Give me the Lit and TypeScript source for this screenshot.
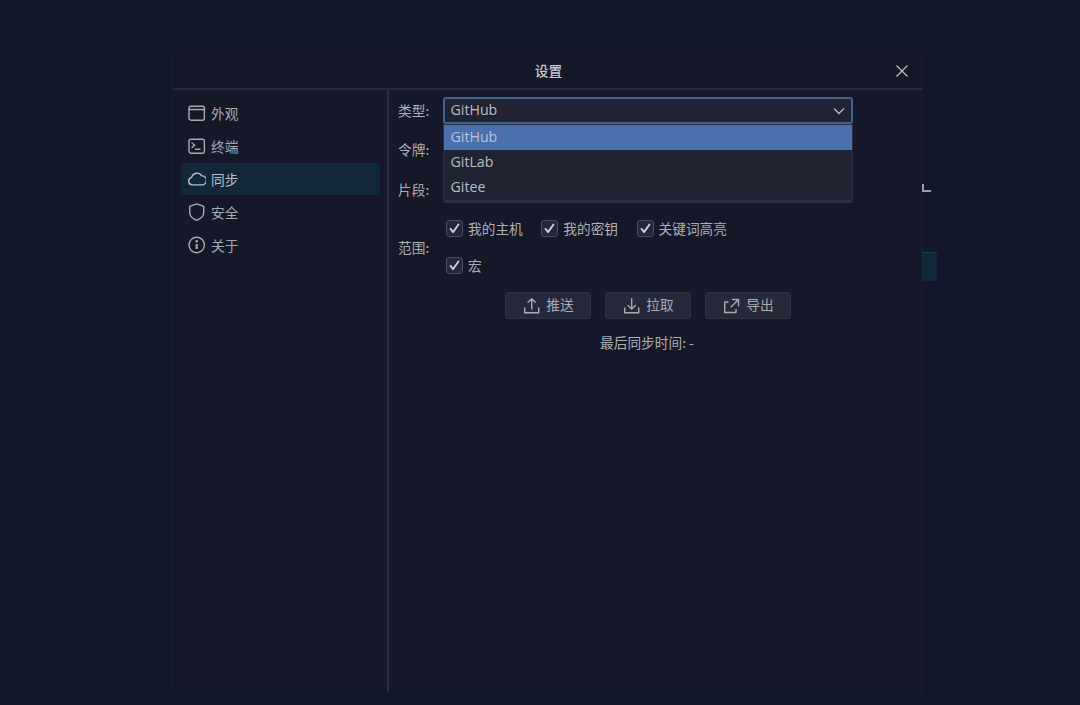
import { LitElement, html, css, svg } from "lit";
import { customElement } from "lit/decorators.js";

const ico = (body: unknown, size = 18) => html`<svg class="ico" width=${size} height=${size} viewBox="0 0 18 18" fill="none" stroke="currentColor" stroke-width="1.400" stroke-linecap="round" stroke-linejoin="round">${body}</svg>`;

const NAV = [
  { t: "外观", i: svg`<rect x="1" y="2.200" width="15.400" height="14" rx="2"/><path d="M1 5.500h15.400"/>` },
  { t: "终端", i: svg`<rect x="1" y="2.200" width="15.400" height="14" rx="2"/><path d="M4 6l2.800 2.200L4 10.400M7.500 12.200h4.500"/>` },
  { t: "同步", i: svg`<path d="M4.300 15.500a3.800 3.800 0 0 1-.6-7.500A5.400 5.400 0 0 1 13.700 6.500a4.500 4.500 0 0 1 .3 9z" transform="translate(0 -.6)"/>`, active: true },
  { t: "安全", i: svg`<path d="M8.700.800l7 2.500v6c0 3.600-2.800 6.500-7 8.100-4.200-1.600-7-4.500-7-8.100v-6z"/>` },
  { t: "关于", i: svg`<circle cx="8.700" cy="9" r="7.700"/><path d="M8.700 8v5" stroke-width="2.200" stroke-linecap="butt"/><circle cx="8.700" cy="5.300" r="1.300" fill="currentColor" stroke="none"/>` },
];

@customElement("app-root")
export class AppRoot extends LitElement {
  static styles = css`
    :host { display: block; width: 1080px; height: 705px; background: #12172a; font-family: "Noto Sans CJK SC", "Noto Sans", sans-serif; color: #b4b6bc; font-size: 13.700px; overflow: hidden; }
    .page { display: flex; justify-content: flex-start; padding: 53px 0 0 173px; height: 652px; box-sizing: border-box; }
    .dialog { position: relative; width: 749px; height: 639px; box-sizing: border-box; background: #141829; box-shadow: 0 0 0 1px #1a1d2d; display: flex; flex-direction: column; }
    .head { height: 37px; box-sizing: border-box; flex: none; display: flex; align-items: center; justify-content: center; border-bottom: 2px solid #262a3c; color: #c8c9ce; font-weight: 500; position: relative; padding: 0 0 1px 2px; }
    .close { position: absolute; right: 13px; top: 11px; color: #c4c6cc; display: block; }
    .body { flex: 1; display: flex; min-height: 0; }
    .side { width: 216px; flex: none; border-right: 2px solid #2b2e41; box-sizing: border-box; padding: 7px 7px 0 8px; display: flex; flex-direction: column; gap: 1px; }
    .nav { height: 32px; display: flex; align-items: center; gap: 5px; padding-left: 7px; border-radius: 3px; color: #a8aab1; }
    .nav.active { background: #112838; color: #b7c0c8; }
    .ico { flex: none; display: block; }
    .main { flex: 1; padding: 7px 0 0 9px; position: relative; }
    .row { display: flex; align-items: center; }
    .label { width: 45px; flex: none; color: #adafb6; padding-bottom: 1px; box-sizing: border-box; }
    .select { width: 410px; height: 27px; box-sizing: border-box; border: 2px solid #3c6491; border-radius: 3px; background: #202332; display: flex; align-items: center; justify-content: space-between; padding: 0 5px 2px 5.500px; font-size: 14.200px; font-family: "Open Sans", "Noto Sans", sans-serif; color: #bcbec3; }
    .chev { color: #b9bbc1; margin-top: 2px; }
    .r2 { height: 40px; margin-top: 5px; }
    .r3 { height: 40px; }
    .menu { position: absolute; left: 54px; top: 34px; width: 410px; height: 79px; box-sizing: border-box; background: #202332; border: 1px solid #2e3142; border-bottom-width: 3px; border-radius: 0 0 3px 3px; font-size: 14.200px; font-family: "Open Sans", "Noto Sans", sans-serif; color: #b9bbc0; }
    .opt { height: 25px; padding: 0 0 2px 6.500px; box-sizing: border-box; display: flex; align-items: center; }
    .opt.sel { background: #4b70ae; color: #b9c3d6; }
    .scope { height: 76px; }
    .checks { display: flex; flex-direction: column; gap: 13px; padding-left: 3px; }
    .line { display: flex; gap: 18.500px; }
    .check { display: flex; align-items: center; gap: 5px; height: 24px; color: #adafb6; }
    .check-text { padding-bottom: 1px; }
    .box { width: 17px; height: 17px; box-sizing: border-box; background: #252838; border: 1.500px solid #4a4d60; border-radius: 3px; display: flex; align-items: center; justify-content: center; color: #d0d2d6; margin-bottom: 1px; }
    .actions { display: flex; gap: 14px; justify-content: flex-start; padding-left: 107px; margin-top: 7px; }
    .btn { width: 86px; height: 27px; box-sizing: border-box; background: #262939; border: 1px solid #2f3244; border-radius: 3px; display: flex; align-items: center; justify-content: center; gap: 6px; color: #a9abb2; }
    .btn-text { padding-bottom: 3px; }
    .last { margin-top: 13px; padding-left: 202px; color: #adafb6; height: 20px; line-height: 20px; }
    .peek-l { position: absolute; left: 749px; top: 131px; width: 9px; height: 8px; box-sizing: border-box; border-left: 2px solid #9a9ca2; border-bottom: 2px solid #9a9ca2; }
    .peek-t { position: absolute; left: 749px; top: 199px; width: 15px; height: 29px; background: #112838; border-top: 1px solid #1d3e55; border-radius: 0 3px 3px 0; box-sizing: border-box; }
  `;

  private check(t: string) {
    return html`<div class="check"><span class="box">${ico(svg`<path d="M3.500 9.500l3.500 4.500L14.500 3.500" stroke-width="2.500"/>`, 13)}</span><span class="check-text">${t}</span></div>`;
  }

  render() {
    return html`<div class="page"><div class="dialog">
      <div class="peek-l"></div><div class="peek-t"></div>
      <div class="head">设置
        <svg class="close" width="14" height="14" viewBox="0 0 14 14" fill="none" stroke="currentColor" stroke-width="1.100"><path d="M1.500 1.500l11 11M12.500 1.500l-11 11"/></svg>
      </div>
      <div class="body">
        <div class="side">
          ${NAV.map((n) => html`<div class="nav ${n.active ? "active" : ""}">${ico(n.i)}<span>${n.t}</span></div>`)}
        </div>
        <div class="main">
          <div class="row"><span class="label">类型:</span>
            <div class="select">GitHub
              <svg class="chev" width="14" height="14" viewBox="0 0 14 14" fill="none" stroke="currentColor" stroke-width="1.300"><path d="M2 4.500l5 5 5-5"/></svg>
            </div>
          </div>
          <div class="row r2"><span class="label">令牌:</span></div>
          <div class="row r3"><span class="label">片段:</span></div>
          <div class="row scope"><span class="label">范围:</span>
            <div class="checks">
              <div class="line">${this.check("我的主机")}${this.check("我的密钥")}${this.check("关键词高亮")}</div>
              <div class="line">${this.check("宏")}</div>
            </div>
          </div>
          <div class="actions">
            <div class="btn">${ico(svg`<path d="M2.700 11v4.700h14V11M9.700 12V1.800M6 5.300l3.700-3.500 3.700 3.500"/>`)}<span class="btn-text">推送</span></div>
            <div class="btn">${ico(svg`<path d="M2.700 11v4.700h14V11M9.700 1.800V12M6 8.500L9.700 12l3.700-3.500"/>`)}<span class="btn-text">拉取</span></div>
            <div class="btn">${ico(svg`<path d="M6 5H2.700v10.500H14v-3M10.500 2.500h6v6M16.500 2.500L9 10"/>`)}<span class="btn-text">导出</span></div>
          </div>
          <div class="last">最后同步时间: -</div>
          <div class="menu">
            <div class="opt sel">GitHub</div>
            <div class="opt">GitLab</div>
            <div class="opt">Gitee</div>
          </div>
        </div>
      </div>
    </div></div>`;
  }
}
